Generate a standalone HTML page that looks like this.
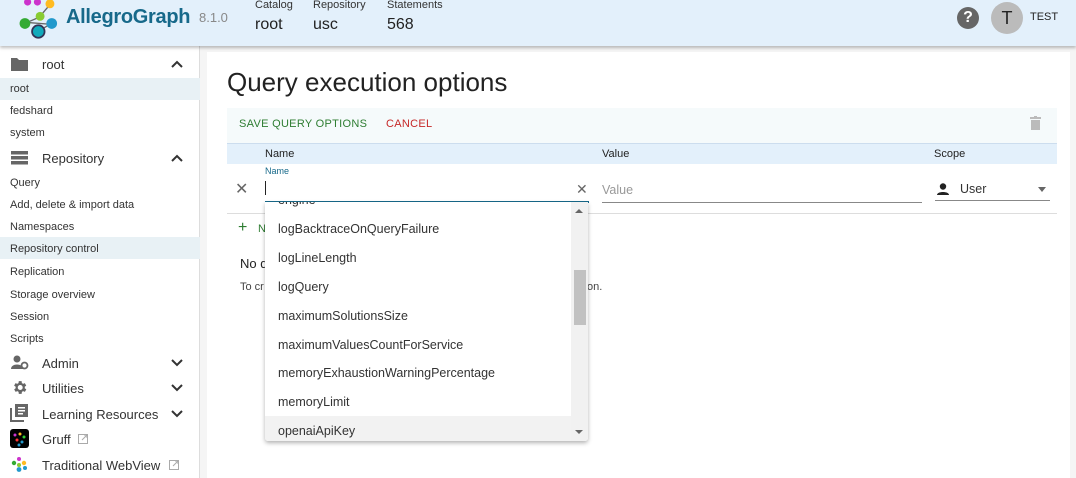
<!DOCTYPE html>
<html><head><meta charset="utf-8"><style>
*{box-sizing:border-box;margin:0;padding:0}
body{width:1076px;height:478px;overflow:hidden;font-family:"Liberation Sans",Arial,sans-serif;background:#f5f5f5;position:relative;color:#222}
.a{position:absolute;white-space:nowrap}
#hdr{position:absolute;left:0;top:0;width:1076px;height:46px;background:#e3f0fb;box-shadow:0 2px 3px rgba(0,0,0,.25);z-index:5}
#side{position:absolute;left:0;top:46px;width:200px;height:432px;background:#fff;border-right:1px solid #ddd}
.s{position:absolute;left:10px;font-size:11px;color:#333}
.g{position:absolute;left:42px;font-size:13px;color:#333}
.hl{position:absolute;left:0;width:200px;height:22px;background:#e8f1f5}
.chev{position:absolute;left:171px}
#card{position:absolute;left:207px;top:52px;width:863px;height:426px;background:#fff}
.opt{position:absolute;left:278px;font-size:12.5px;color:#333}
</style></head><body>
<div id="hdr">
 <svg class="a" style="left:16px;top:-2px" width="50" height="42" viewBox="0 0 56 44">
  <line x1="12" y1="26" x2="26" y2="20" stroke="#666" stroke-width="1.5"/><line x1="14" y1="26" x2="40" y2="28" stroke="#666" stroke-width="1.5"/><line x1="38" y1="28" x2="28" y2="34" stroke="#666" stroke-width="1.5"/><line x1="26" y1="20" x2="38" y2="6" stroke="#666" stroke-width="1.5"/>
  <circle cx="10" cy="27" r="6" fill="#3a3"/><circle cx="27" cy="19" r="5" fill="#8c3"/><circle cx="40" cy="27" r="6" fill="#29c"/><circle cx="38" cy="5" r="5" fill="#fb2"/><circle cx="24" cy="3" r="4" fill="#c3c"/><circle cx="13" cy="3" r="4" fill="#c3c"/><circle cx="25" cy="36" r="7" fill="#1ab" stroke="#335" stroke-width="2"/>
 </svg>
 <div class="a" style="left:66px;top:6px;font-size:20px;font-weight:bold;color:#17698a;letter-spacing:-0.3px">AllegroGraph</div>
 <div class="a" style="left:199px;top:10px;font-size:13px;color:#888">8.1.0</div>
 <div class="a" style="left:255px;top:-1px;font-size:11px;color:#333">Catalog</div>
 <div class="a" style="left:255px;top:16px;font-size:16px;color:#222">root</div>
 <div class="a" style="left:313px;top:-1px;font-size:11px;color:#333">Repository</div>
 <div class="a" style="left:313px;top:16px;font-size:16px;color:#222">usc</div>
 <div class="a" style="left:387px;top:-1px;font-size:11px;color:#333">Statements</div>
 <div class="a" style="left:387px;top:16px;font-size:16px;color:#222">568</div>
 <div class="a" style="left:957px;top:7px;width:22px;height:22px;border-radius:50%;background:#666;color:#fff;font-weight:bold;font-size:16px;text-align:center;line-height:22px">?</div>
 <div class="a" style="left:991px;top:2px;width:32px;height:32px;border-radius:50%;background:#bbb;color:#222;font-size:18px;text-align:center;line-height:32px">T</div>
 <div class="a" style="left:1030px;top:11px;font-size:11px;color:#222">TEST</div>
</div>
<div id="side">
 <div class="hl" style="top:32px"></div><div class="hl" style="top:191px"></div>
 <svg class="a" style="left:11px;top:11px" width="17" height="14"><path d="M0 1h6l2 2h9v11H0z" fill="#666"/></svg>
 <div class="g" style="top:11px">root</div>
 <svg class="chev" style="top:14px" width="12" height="8"><path d="M1 7l5-5 5 5" stroke="#333" stroke-width="2" fill="none"/></svg>
 <div class="s" style="top:37px">root</div>
 <div class="s" style="top:59px">fedshard</div>
 <div class="s" style="top:81px">system</div>
 <svg class="a" style="left:11px;top:105px" width="17" height="14"><rect y="0" width="17" height="3.5" fill="#666"/><rect y="5" width="17" height="3.5" fill="#666"/><rect y="10" width="17" height="3.5" fill="#666"/></svg>
 <div class="g" style="top:105px">Repository</div>
 <svg class="chev" style="top:108px" width="12" height="8"><path d="M1 7l5-5 5 5" stroke="#333" stroke-width="2" fill="none"/></svg>
 <div class="s" style="top:131px">Query</div>
 <div class="s" style="top:153px">Add, delete &amp; import data</div>
 <div class="s" style="top:175px">Namespaces</div>
 <div class="s" style="top:197px">Repository control</div>
 <div class="s" style="top:220px">Replication</div>
 <div class="s" style="top:243px">Storage overview</div>
 <div class="s" style="top:265px">Session</div>
 <div class="s" style="top:287px">Scripts</div>
 <svg class="a" style="left:11px;top:309px" width="18" height="15"><circle cx="6" cy="4" r="3.5" fill="#666"/><path d="M0 14c0-6 12-6 12 0z" fill="#666"/><circle cx="13.5" cy="10.5" r="3" fill="none" stroke="#666" stroke-width="1.8"/></svg>
 <div class="g" style="top:310px">Admin</div>
 <svg class="chev" style="top:313px" width="12" height="8"><path d="M1 1l5 5 5-5" stroke="#333" stroke-width="2" fill="none"/></svg>
 <svg class="a" style="left:11px;top:333px" width="17" height="17" viewBox="0 0 24 24"><path fill="#666" d="M19.4 13a7.5 7.5 0 000-2l2.1-1.6-2-3.5-2.5 1a7 7 0 00-1.7-1L15 3h-4l-.4 2.9a7 7 0 00-1.7 1l-2.5-1-2 3.5L6.6 11a7.5 7.5 0 000 2l-2.1 1.6 2 3.5 2.5-1a7 7 0 001.7 1L11 21h4l.4-2.9a7 7 0 001.7-1l2.5 1 2-3.5zM13 15.5a3.5 3.5 0 110-7 3.5 3.5 0 010 7z"/></svg>
 <div class="g" style="top:335px">Utilities</div>
 <svg class="chev" style="top:338px" width="12" height="8"><path d="M1 1l5 5 5-5" stroke="#333" stroke-width="2" fill="none"/></svg>
 <svg class="a" style="left:10px;top:358px" width="18" height="18"><path d="M1 4v13h13" stroke="#666" stroke-width="2" fill="none"/><rect x="5" y="0" width="13" height="13" fill="#666"/><rect x="8" y="3" width="7" height="1.5" fill="#fff"/><rect x="8" y="6" width="7" height="1.5" fill="#fff"/><rect x="8" y="9" width="5" height="1.5" fill="#fff"/></svg>
 <div class="g" style="top:361px">Learning Resources</div>
 <svg class="chev" style="top:364px" width="12" height="8"><path d="M1 1l5 5 5-5" stroke="#333" stroke-width="2" fill="none"/></svg>
 <svg class="a" style="left:10px;top:383px" width="19" height="19"><rect width="19" height="19" rx="3" fill="#000"/><circle cx="5" cy="6" r="1.5" fill="#c3c"/><circle cx="10" cy="5" r="1.5" fill="#fb2"/><circle cx="14" cy="8" r="1.5" fill="#3c3"/><circle cx="7" cy="11" r="1.5" fill="#f33"/><circle cx="12" cy="13" r="1.5" fill="#29c"/><circle cx="9" cy="16" r="1.5" fill="#29c"/></svg>
 <div class="g" style="top:386px">Gruff</div>
 <svg class="a" style="left:78px;top:388px" width="10" height="10"><rect x="0.5" y="0.5" width="9" height="9" fill="none" stroke="#aaa"/><path d="M4 6l5-5M6 1h3v3" stroke="#aaa" fill="none"/></svg>
 <svg class="a" style="left:10px;top:410px" width="18" height="16"><circle cx="9" cy="3" r="2" fill="#c3c"/><circle cx="4" cy="7" r="2.2" fill="#3a3"/><circle cx="14" cy="7" r="2.2" fill="#fb2"/><circle cx="9" cy="9" r="2" fill="#8c3"/><circle cx="9" cy="13.5" r="2.4" fill="#29c"/><circle cx="15" cy="12" r="2" fill="#29c"/></svg>
 <div class="g" style="top:412px">Traditional WebView</div>
 <svg class="a" style="left:169px;top:414px" width="10" height="10"><rect x="0.5" y="0.5" width="9" height="9" fill="none" stroke="#aaa"/><path d="M4 6l5-5M6 1h3v3" stroke="#aaa" fill="none"/></svg>
</div>
<div id="card">
 <div class="a" style="left:20px;top:15px;font-size:26px;color:#222">Query execution options</div>
 <div class="a" style="left:20px;top:56px;width:830px;height:35px;background:#f5fafb"></div>
 <div class="a" style="left:32px;top:66px;font-size:11px;color:#2e7d32;letter-spacing:.3px">SAVE QUERY OPTIONS</div>
 <div class="a" style="left:179px;top:66px;font-size:11px;color:#c62828;letter-spacing:.3px">CANCEL</div>
 <svg class="a" style="left:823px;top:64px" width="11" height="14"><rect x="0" y="1" width="11" height="2" fill="#bbb"/><rect x="4" y="0" width="3" height="2" fill="#bbb"/><rect x="1" y="4" width="9" height="10" fill="#bbb"/></svg>
 <div class="a" style="left:20px;top:91px;width:830px;height:21px;background:#e3f0fb;border-top:1px solid #cde"></div>
 <div class="a" style="left:58px;top:96px;font-size:11px;color:#222">Name</div>
 <div class="a" style="left:395px;top:96px;font-size:11px;color:#222">Value</div>
 <div class="a" style="left:727px;top:96px;font-size:11px;color:#222">Scope</div>
 <div class="a" style="left:20px;top:161px;width:830px;height:1px;background:#ddd"></div>
 <div class="a" style="left:28px;top:127px;font-size:16px;color:#666">&#10005;</div>
 <div class="a" style="left:58px;top:114px;font-size:9px;color:#17698a">Name</div>
 <div class="a" style="left:58px;top:129px;width:1px;height:14px;background:#222"></div>
 <div class="a" style="left:58px;top:149px;width:324px;height:2px;background:#17698a"></div>
 <div class="a" style="left:369px;top:129px;font-size:14px;color:#666">&#10005;</div>
 <div class="a" style="left:395px;top:131px;font-size:12.5px;color:#999">Value</div>
 <div class="a" style="left:395px;top:150px;width:320px;height:1px;background:#888"></div>
 <svg class="a" style="left:729px;top:131px" width="14" height="13"><circle cx="7" cy="3.5" r="3.2" fill="#222"/><path d="M1 12c0-4 12-4 12 0z" fill="#222"/></svg>
 <div class="a" style="left:753px;top:130px;font-size:12.5px;color:#333">User</div>
 <div class="a" style="left:831px;top:135px;border:4px solid transparent;border-top:5px solid #666"></div>
 <div class="a" style="left:728px;top:148px;width:115px;height:1px;background:#888"></div>
 <div class="a" style="left:31px;top:167px;font-size:16px;color:#2e7d32">+</div>
 <div class="a" style="left:51px;top:171px;font-size:11px;color:#2e7d32">N</div>
 <div class="a" style="left:33px;top:204px;font-size:13px;color:#222">No q</div>
 <div class="a" style="left:33px;top:229px;font-size:11px;color:#444">To cr</div>
 <div class="a" style="left:380px;top:229px;font-size:11px;color:#444">on.</div>
</div>
<div class="a" style="left:265px;top:202px;width:323px;height:239px;background:#fff;box-shadow:0 2px 4px rgba(0,0,0,.3);overflow:hidden;border-radius:0 0 3px 3px">
 <div class="a" style="left:13px;top:-9px;font-size:12.5px;color:#333">engine</div>
 <div class="a" style="left:0;top:214px;width:306px;height:25px;background:#f2f2f2"></div>
 <div class="a" style="left:306px;top:0;width:17px;height:239px;background:#f1f1f1"></div>
 <div class="a" style="left:309px;top:68px;width:12px;height:55px;background:#c1c1c1"></div>
 <div class="a" style="left:310px;top:7px;border:4px solid transparent;border-bottom:4px solid #666;border-top:0"></div>
 <div class="a" style="left:310px;top:228px;border:4px solid transparent;border-top:4px solid #666;border-bottom:0"></div>
</div>
<div class="opt" style="top:222px">logBacktraceOnQueryFailure</div>
<div class="opt" style="top:251px">logLineLength</div>
<div class="opt" style="top:280px">logQuery</div>
<div class="opt" style="top:309px">maximumSolutionsSize</div>
<div class="opt" style="top:338px">maximumValuesCountForService</div>
<div class="opt" style="top:366px">memoryExhaustionWarningPercentage</div>
<div class="opt" style="top:395px">memoryLimit</div>
<div class="opt" style="top:424px">openaiApiKey</div>
</body></html>
